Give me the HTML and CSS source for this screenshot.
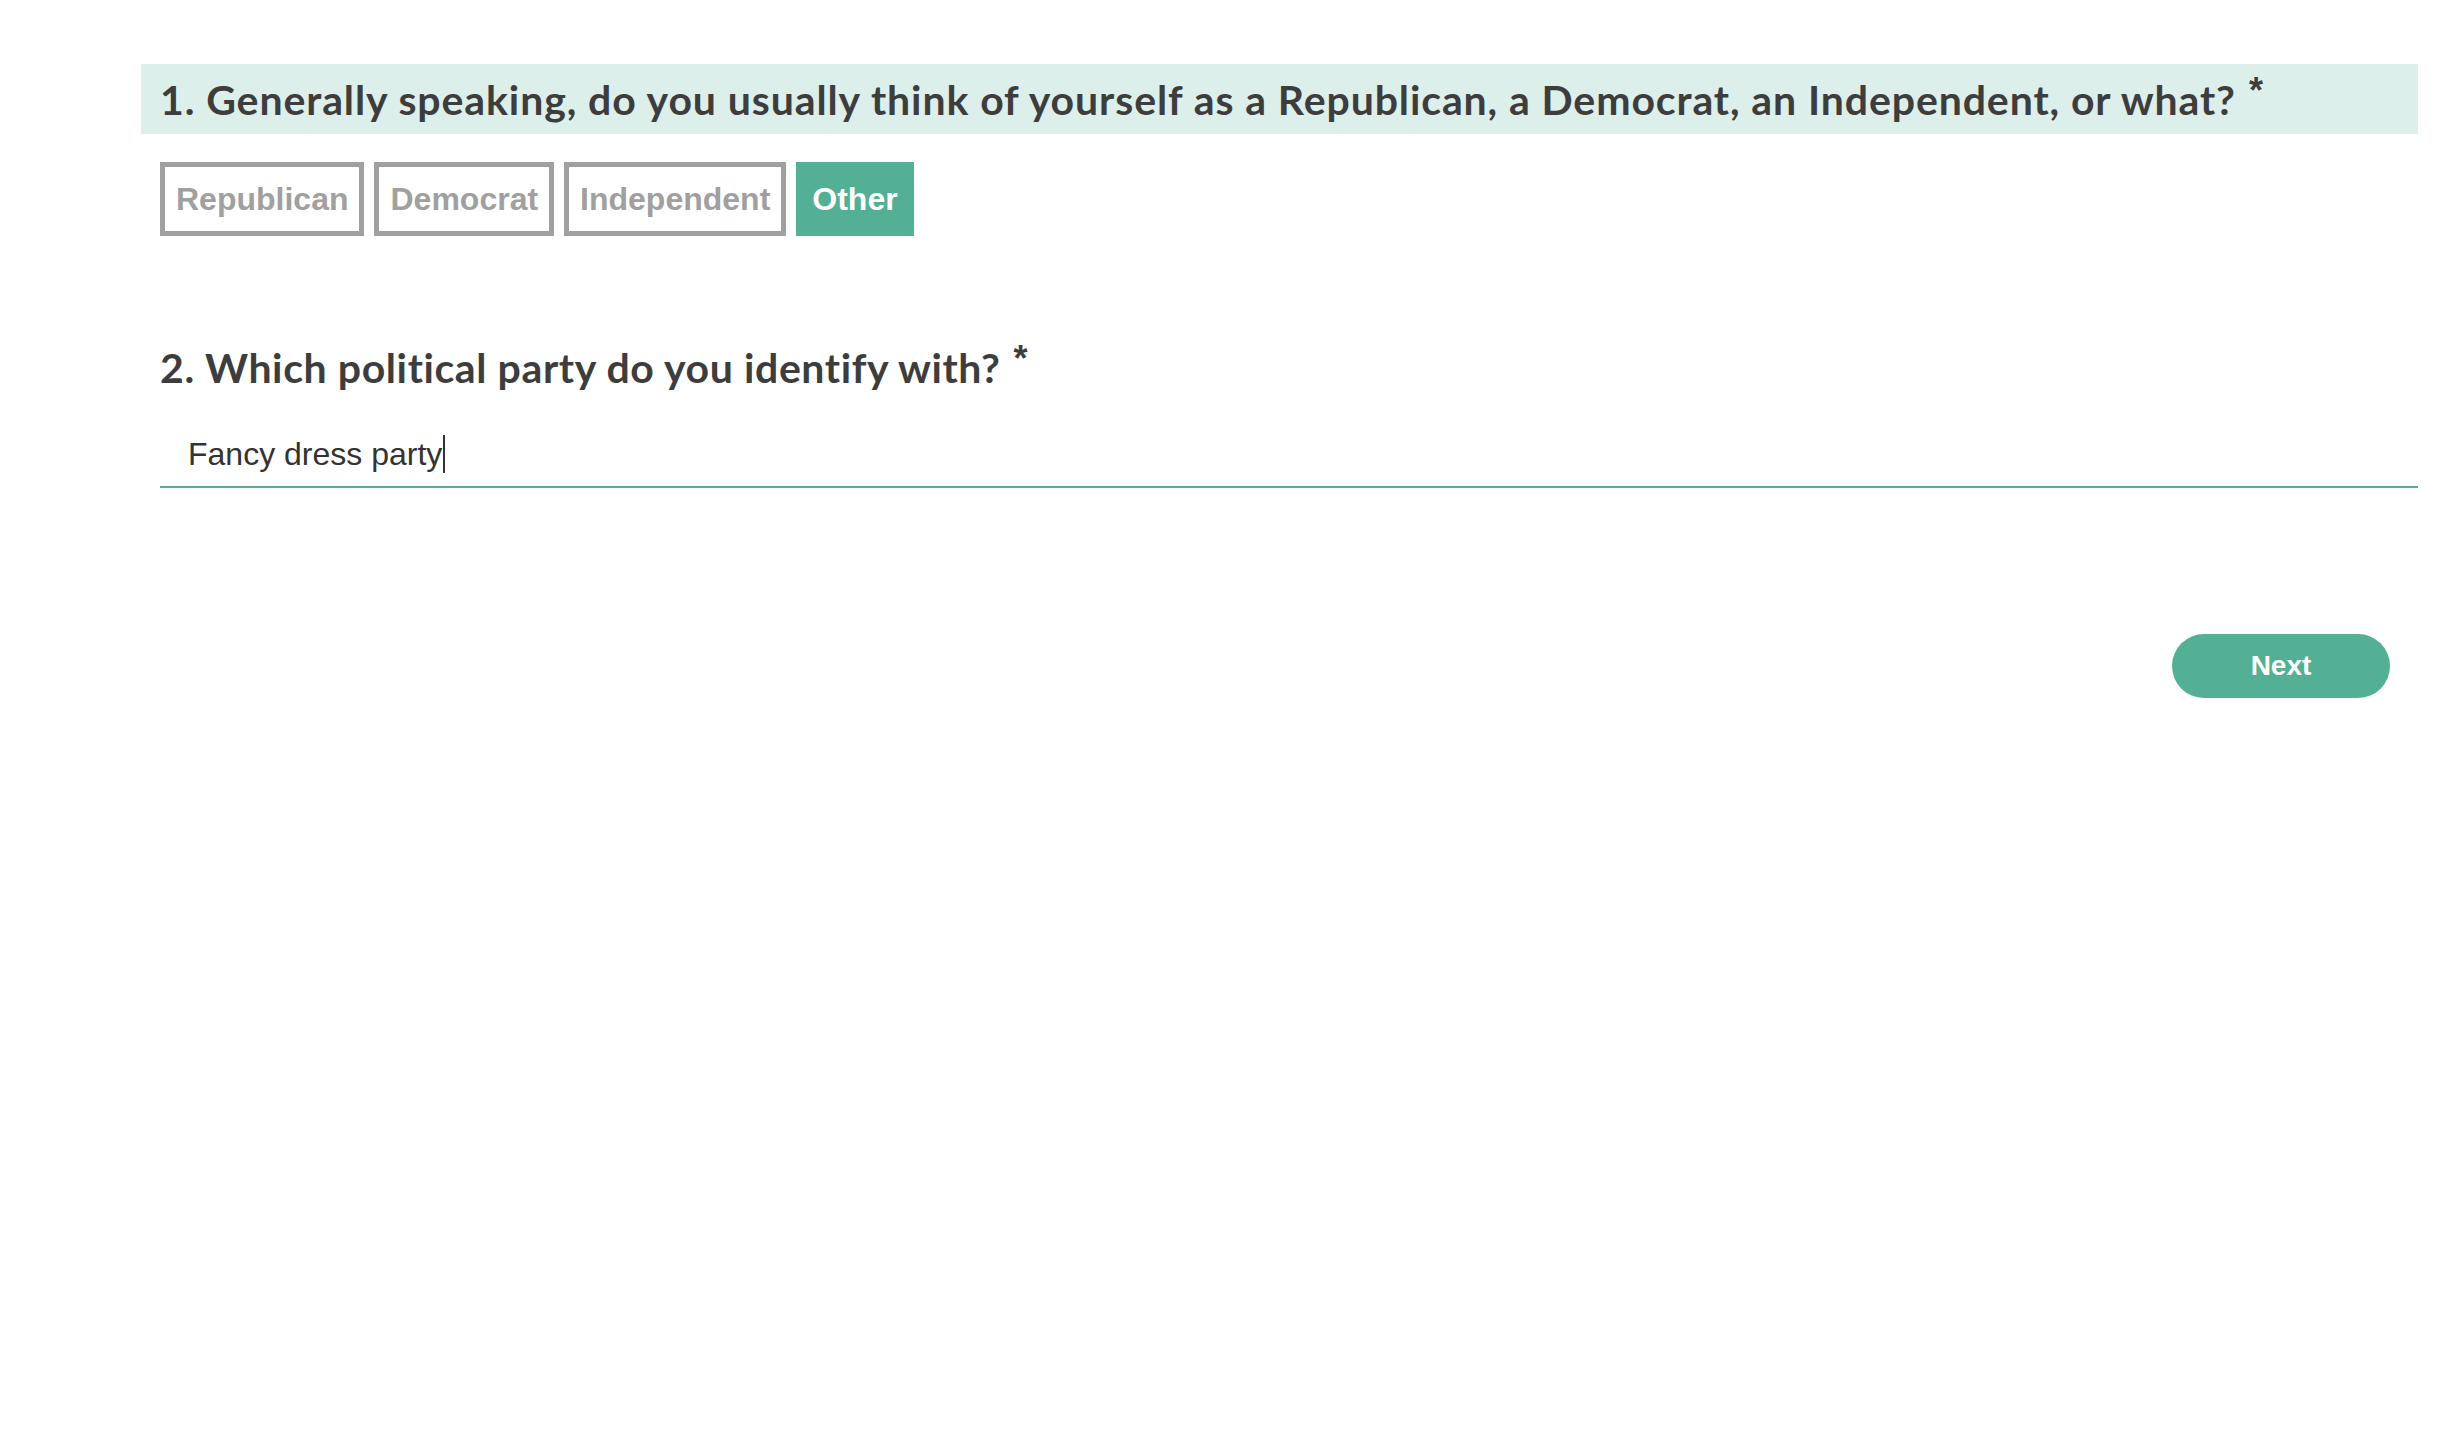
FILE: index.html
```html
<!DOCTYPE html>
<html lang="en">
<head>
<meta charset="utf-8">
<title>Survey</title>
<link rel="stylesheet" href="styles.css">
</head>
<body>
<main class="survey">
  <section class="question question-active">
    <h2 class="question-title">1. Generally speaking, do you usually think of yourself as a Republican, a Democrat, an Independent, or what?<span class="req">*</span></h2>
  </section>
  <div class="options">
    <button class="option">Republican</button>
    <button class="option">Democrat</button>
    <button class="option">Independent</button>
    <button class="option option-selected">Other</button>
  </div>
  <section class="question question-two">
    <h2 class="question-title question-title-tight">2. Which political party do you identify with?<span class="req">*</span></h2>
  </section>
  <div class="answer">
    <span class="answer-text">Fancy dress party</span><span class="caret"></span>
  </div>
  <div class="actions">
    <button class="next">Next</button>
  </div>
</main>
</body>
</html>
```
FILE: styles.css
```css
html, body {
  margin: 0;
  padding: 0;
  background: #ffffff;
}
.survey {
  padding: 64px 20px 0 141px;
}
.question {
  display: flex;
  align-items: center;
  height: 70px;
  padding-left: 19px;
}
.question-active {
  background: #ddefea;
}
.question-title {
  margin: 0;
  font-family: Lato, "Open Sans", sans-serif;
  font-weight: 700;
  font-size: 41px;
  letter-spacing: 0.9px;
  color: #3d3d3d;
  white-space: nowrap;
}
.question-title-tight {
  letter-spacing: 0.6px;
}
.req {
  position: relative;
  top: -12px;
  margin-left: 13px;
  font-family: "Liberation Sans", Arial, sans-serif;
  font-size: 36px;
  letter-spacing: 0;
}
.options {
  display: flex;
  gap: 10px;
  margin-top: 28px;
  padding-left: 19px;
}
.option {
  height: 74px;
  padding: 0 11px;
  border: 5px solid #a0a0a0;
  background: #ffffff;
  color: #a0a0a0;
  font-family: "Liberation Sans", Arial, sans-serif;
  font-weight: 700;
  font-size: 32px;
  cursor: pointer;
}
.option-selected {
  background: #53b094;
  border-color: #53b094;
  color: #ffffff;
}
.question-two {
  margin-top: 91px;
  height: 81px;
}
.answer {
  display: flex;
  align-items: center;
  height: 64px;
  padding-top: 14px;
  margin-left: 19px;
  padding-left: 28px;
  border-bottom: 2px solid #53b094;
  font-family: "Liberation Sans", Arial, sans-serif;
  font-size: 32px;
  color: #333333;
}
.caret {
  display: inline-block;
  width: 2px;
  height: 38px;
  margin-left: 1px;
  background: #333333;
}
.actions {
  display: flex;
  justify-content: flex-end;
  margin-top: 146px;
  padding-right: 28px;
}
.next {
  width: 218px;
  height: 64px;
  border: none;
  border-radius: 32px;
  background: #53b094;
  color: #ffffff;
  font-family: "Liberation Sans", Arial, sans-serif;
  font-weight: 700;
  font-size: 28px;
  cursor: pointer;
}
```
